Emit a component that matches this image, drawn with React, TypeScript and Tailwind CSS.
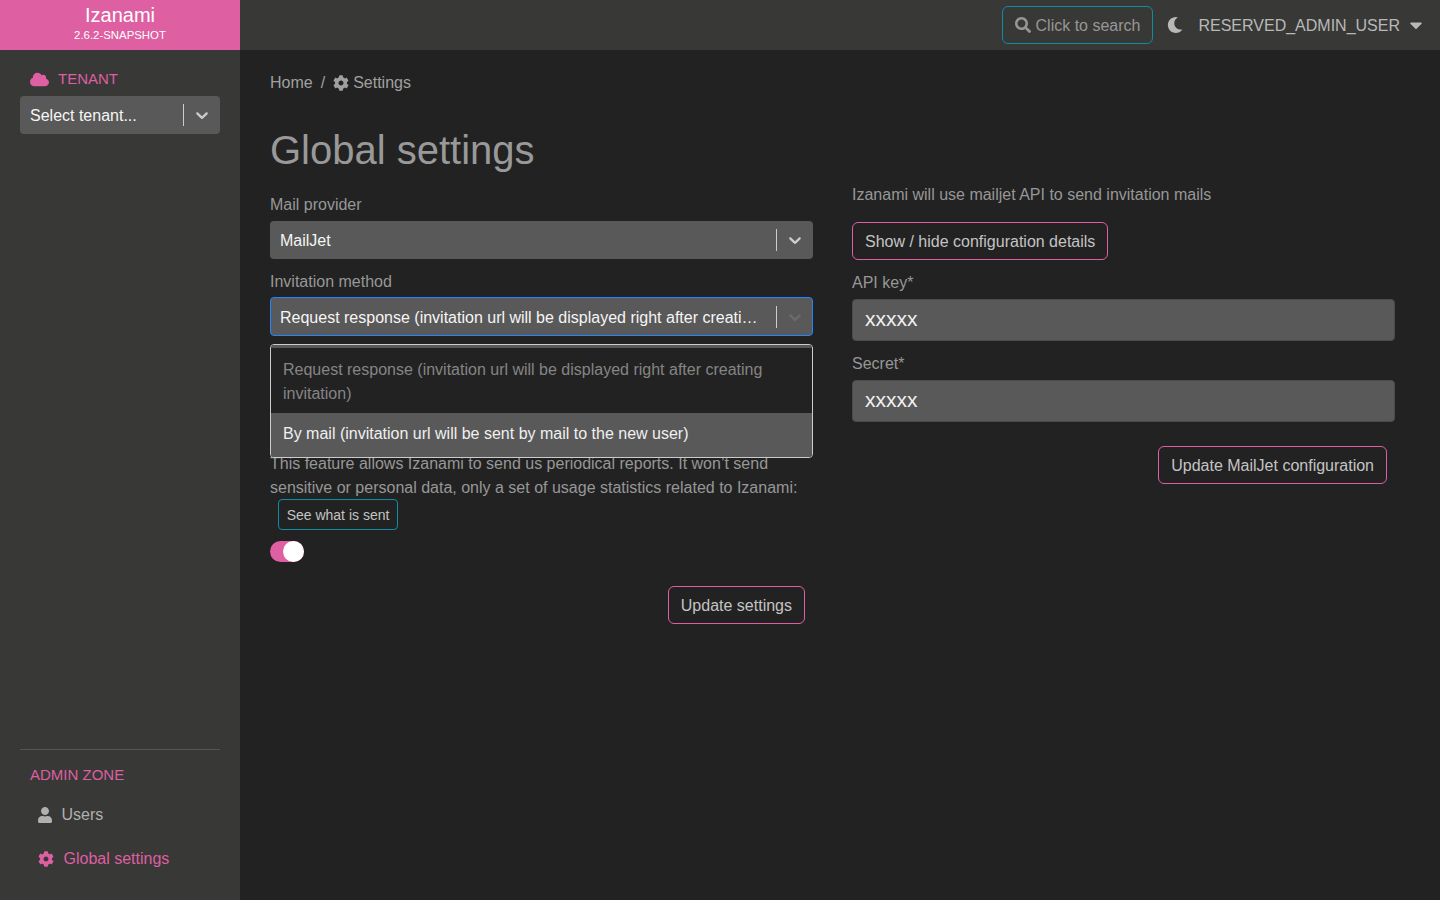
import { FaCloud, FaCog, FaUser, FaMoon, FaSearch, FaCaretDown } from "react-icons/fa";

function Chevron({ className }: { className: string }) {
  return (
    <svg viewBox="0 0 20 20" width="20" height="20" className={className} fill="currentColor">
      <path d="M4.516 7.548c0.436-0.446 1.043-0.481 1.576 0l3.908 3.747 3.908-3.747c0.533-0.481 1.141-0.446 1.574 0 0.436 0.445 0.408 1.197 0 1.615-0.406 0.418-4.695 4.502-4.695 4.502-0.217 0.223-0.502 0.335-0.787 0.335s-0.57-0.112-0.789-0.335c0 0-4.287-4.084-4.695-4.502s-0.436-1.17 0-1.615z" />
    </svg>
  );
}

function SelectBox({ text, focused }: { text: string; focused?: boolean }) {
  return (
    <div className={`flex items-center rounded bg-[#595959] text-[#f5f5f5] ${focused ? "h-[39px] border border-[#2684ff] pl-[9px]" : "h-[38px] pl-[10px]"}`}>
      <span className={`min-w-0 flex-1 truncate pr-[12px] ${focused ? "pt-[2px]" : "pt-px"}`}>{text}</span>
      <span className="h-[22px] w-px bg-[#cccccc]" />
      <span className={`flex justify-center ${focused ? "w-[35px]" : "w-[36px]"}`}>
        <Chevron className={focused ? "text-[#6b6b6b]" : "text-[#cccccc]"} />
      </span>
    </div>
  );
}

function PinkButton({ children }: { children: string }) {
  return (
    <button className="h-[38px] rounded-md border border-[#df5fa4] bg-transparent px-3 pt-px text-[#c4c4c4]">
      {children}
    </button>
  );
}

export default function App() {
  return (
    <div className="flex min-h-[900px] flex-col bg-[#222222] text-[16px] leading-6 text-[#979797] [font-family:'Liberation_Sans',Arial,sans-serif]">
      <header className="flex h-[50px] bg-[#383836]">
        <div className="flex w-[240px] flex-col items-center bg-[#de5fa2] pt-[3px] text-white">
          <span className="text-[20px] leading-[24px]">Izanami</span>
          <span className="text-[11.4px] leading-[16px]">2.6.2-SNAPSHOT</span>
        </div>
        <div className="flex flex-1 items-center justify-end pr-[14px]">
          <div className="flex h-[38px] items-center gap-[5px] rounded-md border border-[#0f8ca6] pl-3 pr-[12px] text-[#979797]">
            <FaSearch size={16} />
            <span className="pt-px">Click to search</span>
          </div>
          <FaMoon size={16} className="ml-[14px] text-[#b8b8b8]" />
          <span className="ml-[15px] pt-px text-[#b8b8b8]">RESERVED_ADMIN_USER</span>
          <FaCaretDown size={20} className="ml-[6px] text-[#b8b8b8]" />
        </div>
      </header>

      <div className="flex flex-1">
        <aside className="flex w-[240px] flex-col bg-[#383836] px-5 pb-[29px] pt-[17px]">
          <div className="flex h-6 items-center gap-[9px] pl-[10px] text-[#de5fa2]">
            <FaCloud size={19} />
            <span className="text-[15px]">TENANT</span>
          </div>
          <div className="mt-[5px]">
            <SelectBox text="Select tenant..." />
          </div>
          <div className="mt-auto border-t border-[#555555] pt-[13px]">
            <div className="pl-[10px] text-[15px] text-[#de5fa2]">ADMIN ZONE</div>
            <div className="mt-[16px] flex items-center gap-[8.5px] pl-[17px] text-[#b0b0b0]">
              <FaUser size={16} />
              <span>Users</span>
            </div>
            <div className="mt-[20px] flex items-center gap-[9.5px] pl-[18px] text-[#de5fa2]">
              <FaCog size={16} />
              <span>Global settings</span>
            </div>
          </div>
        </aside>

        <main className="flex-1 pl-[30px] pr-[45px] pt-[21px]">
          <nav className="flex items-center text-[#a0a0a0]">
            <span>Home</span>
            <span className="mx-[8px]">/</span>
            <FaCog size={16} />
            <span className="ml-1">Settings</span>
          </nav>
          <h1 className="mt-[31px] text-[40px] font-normal leading-[48px] text-[#999999]">Global settings</h1>

          <div className="mt-[9px] grid grid-cols-2 gap-x-[39px]">
            <section className="flex flex-col pt-[10px]">
              <label className="h-6">Mail provider</label>
              <div className="mt-[4px]">
                <SelectBox text="MailJet" />
              </div>
              <label className="mt-[11px] h-6">Invitation method</label>
              <div className="relative mt-[3px]">
                <SelectBox text="Request response (invitation url will be displayed right after creating invitation)" focused />
                <div className="absolute left-0 right-0 top-[47px] z-10 overflow-hidden rounded border border-[#cccccc] bg-[#222222]">
                  <div className="h-[3px] bg-[#595959]" />
                  <div className="px-3 pb-[7px] pt-[10px] text-[#858585]">Request response (invitation url will be displayed right after creating invitation)</div>
                  <div className="bg-[#595959] px-3 pb-[11px] pt-[9px] text-[#f0f0f0]">By mail (invitation url will be sent by mail to the new user)</div>
                </div>
              </div>
              <p className="mt-[116px]">
                This feature allows Izanami to send us periodical reports. It won’t send sensitive or personal data, only a set of usage statistics related to Izanami:
              </p>
              <button className="-mt-px ml-2 h-[31px] w-[120px] rounded border border-[#0f8ca6] text-[14px] text-[#c4c4c4]">See what is sent</button>
              <div className="relative mt-[11px] h-[21px] w-[34px] rounded-full bg-[#de5fa2]">
                <span className="absolute right-0 top-0 h-[21px] w-[21px] rounded-full bg-white" />
              </div>
              <div className="mt-[24px] flex justify-end pr-2">
                <PinkButton>Update settings</PinkButton>
              </div>
            </section>

            <section className="flex flex-col">
              <p className="h-6">Izanami will use mailjet API to send invitation mails</p>
              <div className="mt-[15px]">
                <PinkButton>Show / hide configuration details</PinkButton>
              </div>
              <label className="mt-[11px] h-6">API key*</label>
              <div className="mt-[4px] flex h-[42px] items-center rounded border border-[#4a4a4a] bg-[#595959] px-3 pb-[2px] text-[21px] text-[#f0f0f0]">xxxxx</div>
              <label className="mt-[11px] h-6">Secret*</label>
              <div className="mt-[4px] flex h-[42px] items-center rounded border border-[#4a4a4a] bg-[#595959] px-3 pb-[2px] text-[21px] text-[#f0f0f0]">xxxxx</div>
              <div className="mt-[24px] flex justify-end pr-2">
                <PinkButton>Update MailJet configuration</PinkButton>
              </div>
            </section>
          </div>
        </main>
      </div>
    </div>
  );
}
